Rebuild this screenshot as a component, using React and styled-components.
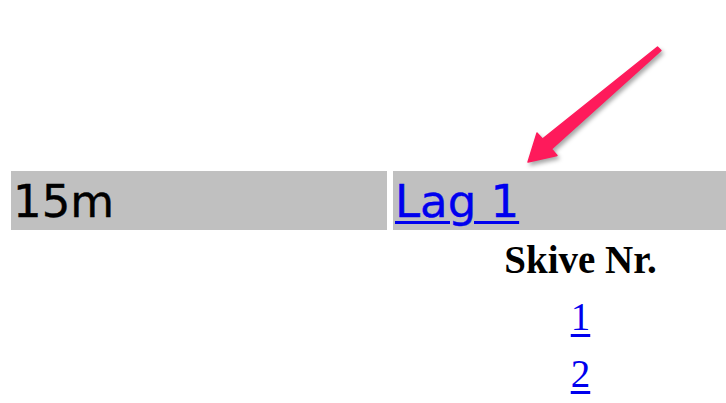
import React from "react";
import styled, { createGlobalStyle } from "styled-components";

const GlobalStyle = createGlobalStyle`
  html, body {
    margin: 0;
    padding: 0;
    background: #ffffff;
    overflow: hidden;
  }
  body {
    width: 726px;
    height: 403px;
    position: relative;
  }
`;

const Page = styled.div`
  padding: 171px 0 0 11px;
`;

const Board = styled.div`
  display: grid;
  grid-template-columns: 376px 333px;
  column-gap: 6px;
`;

const HeadCell = styled.div`
  background: #c0c0c0;
  height: 59px;
  box-sizing: border-box;
  padding: 5px 0 0 2px;
  font-family: "DejaVu Sans", Verdana, sans-serif;
  font-size: 45px;
  line-height: 52px;
  color: #000;
  white-space: nowrap;
  -webkit-text-stroke: 0.4px #000;

  a {
    color: #0000ee;
    -webkit-text-stroke: 0.4px #0000ee;
    text-decoration: underline;
    text-decoration-thickness: 3px;
    text-underline-offset: 4px;
  }
`;

const Targets = styled.div`
  grid-column: 2;
  display: flex;
  flex-direction: column;
  align-items: center;
  padding: 9px 0 0 42px;
  font-family: "Liberation Serif", "Times New Roman", serif;
  font-size: 39px;
`;

const TargetRow = styled.div`
  height: 57px;
  line-height: 42px;
  font-weight: ${(p) => (p.$head ? 700 : 400)};

  a {
    color: #0000ee;
    text-decoration: underline;
    text-decoration-thickness: 3px;
    text-underline-offset: 4px;
  }
`;

const Pointer = styled.svg`
  position: absolute;
  left: 0;
  top: 0;
  pointer-events: none;
  filter: drop-shadow(2px 3px 2px rgba(0, 0, 0, 0.35));
`;

function Arrow() {
  return (
    <Pointer width="726" height="403" viewBox="0 0 726 403">
      <polygon
        points="657.5,47 661,50.5 551.5,149 557,155.5 528,162 537,133 542.5,139"
        fill="#fe1a5b"
        stroke="#fe1a5b"
        strokeWidth="1.4"
        strokeLinejoin="round"
      />
    </Pointer>
  );
}

export default function App() {
  const skiver = [1, 2];
  return (
    <>
      <GlobalStyle />
      <Page>
        <Board>
          <HeadCell>15m</HeadCell>
          <HeadCell>
            <a href="#lag1">Lag 1</a>
          </HeadCell>
          <Targets>
            <TargetRow $head>Skive Nr.</TargetRow>
            {skiver.map((n) => (
              <TargetRow key={n}>
                <a href={`#skive${n}`}>{n}</a>
              </TargetRow>
            ))}
          </Targets>
        </Board>
      </Page>
      <Arrow />
    </>
  );
}
